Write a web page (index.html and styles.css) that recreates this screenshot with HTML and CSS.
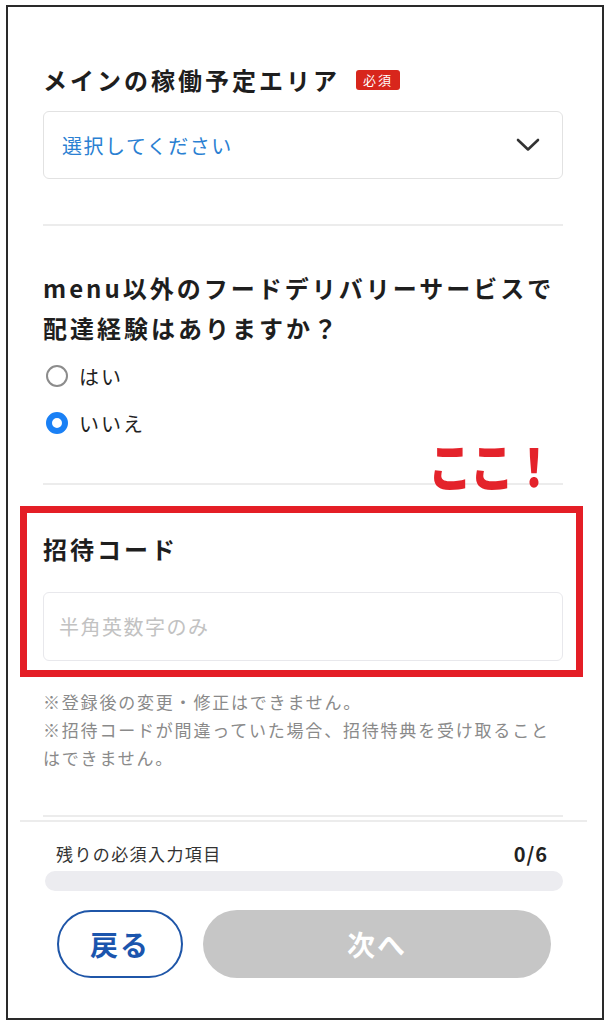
FILE: index.html
```html
<!DOCTYPE html>
<html lang="ja">

<head>
  <meta charset="UTF-8" />
  <meta name="viewport" content="width=device-width, initial-scale=1.0" />
  <title>配達パートナー登録</title>
  <link rel="stylesheet" href="styles.css">
</head>

<body>
  <div class="frame">
    <div class="form">
      <section class="field">
        <h2 class="field-title field-title--badge">メインの稼働予定エリア<span class="badge">必須</span></h2>
        <div class="select">
          <span class="select-text">選択してください</span>
          <svg class="chevron" width="24" height="14" viewBox="0 0 24 14">
            <path d="M2 2 L12 11.5 L22 2" fill="none" stroke="#333" stroke-width="2.6" stroke-linecap="round" stroke-linejoin="round" />
          </svg>
        </div>
      </section>

      <hr class="divider">

      <section class="field">
        <h2 class="field-title">menu以外のフードデリバリーサービスで配達経験はありますか？</h2>
        <div class="radios">
          <label class="radio"><span class="radio-mark"></span>はい</label>
          <label class="radio"><span class="radio-mark is-checked"></span>いいえ</label>
        </div>
      </section>

      <hr class="divider">

      <section class="field field--invite">
        <h2 class="field-title">招待コード</h2>
        <div class="input">半角英数字のみ</div>
      </section>

      <div class="notes">
        <p>※登録後の変更・修正はできません。</p>
        <p>※招待コードが間違っていた場合、招待特典を受け取ること<br>はできません。</p>
      </div>

      <hr class="divider divider--last">
    </div>

    <footer class="footer">
      <div class="progress-head">
        <span class="progress-label">残りの必須入力項目</span>
        <span class="progress-count">0/6</span>
      </div>
      <div class="progress-bar"></div>
      <div class="buttons">
        <button class="btn btn-back">戻る</button>
        <button class="btn btn-next" disabled>次へ</button>
      </div>
    </footer>

    <!-- annotation drawn over the screenshot -->
    <div class="callout-box"></div>
    <div class="callout-text">ここ！</div>
  </div>
</body>

</html>
```

FILE: styles.css
```css
* {
  box-sizing: border-box;
}

body {
  margin: 0;
  padding: 0;
  background-color: #ffffff;
  color: #222222;
  font-family: "Noto Sans CJK JP", "Noto Sans", sans-serif;
}

.frame {
  position: relative;
  height: 1015px;
  margin: 5px 7px 0 6px;
  border: 2px solid #2a2a2a;
}

.form {
  padding: 55px 39px 0 35px;
}

.field-title {
  margin: 0;
  font-size: 24px;
  line-height: 40px;
  font-weight: bold;
  letter-spacing: 3px;
  color: #1e1e1e;
}

.field-title--badge {
  display: flex;
  align-items: center;
  line-height: 36px;
}

.badge {
  display: inline-block;
  margin-left: 16px;
  padding: 0 7px;
  height: 20px;
  line-height: 20px;
  border-radius: 3px;
  background-color: #d8261c;
  color: #fff;
  font-size: 13px;
  font-weight: normal;
  letter-spacing: 2px;
}

.select {
  display: flex;
  align-items: center;
  justify-content: space-between;
  height: 68px;
  margin-top: 13px;
  padding: 0 22px 0 18px;
  border: 1.5px solid #e2e2e2;
  border-radius: 6px;
}

.select-text {
  font-size: 20px;
  letter-spacing: 1.5px;
  color: #2a80d2;
}

.divider {
  margin: 45px 0 0;
  border: none;
  border-top: 2px solid #ececec;
}

.divider + .field {
  margin-top: 42px;
}

.radios {
  display: flex;
  flex-direction: column;
  gap: 17px;
  margin-top: 13px;
}

.radio {
  display: flex;
  align-items: center;
  gap: 11px;
  height: 30px;
  padding-left: 3px;
  font-size: 20px;
  letter-spacing: 2px;
  color: #222;
}

.radio-mark {
  width: 22px;
  height: 22px;
  border-radius: 50%;
  border: 2px solid #8c8c8c;
}

.radio-mark.is-checked {
  border: 6.5px solid #1a80f5;
}

.divider + .field--invite {
  margin-top: 46px;
}

.field--invite .field-title {
  line-height: 36px;
}

.input {
  display: flex;
  align-items: center;
  height: 69px;
  margin-top: 25px;
  padding-left: 15px;
  border: 1.5px solid #e8e8ec;
  border-radius: 6px;
  font-size: 20px;
  letter-spacing: 1.5px;
  color: #c2c2c2;
}

.notes {
  margin-top: 27px;
  font-size: 17px;
  line-height: 28px;
  letter-spacing: 1.8px;
  color: #8a8a8a;
}

.notes p {
  margin: 0;
}

.divider--last {
  margin-top: 43px;
}

.footer {
  margin: 3px 15px 0 12px;
  padding: 19px 24px 0 25px;
  border-top: 2px solid #ececec;
}

.progress-head {
  display: flex;
  align-items: center;
  justify-content: space-between;
  height: 24px;
  padding: 0 15px 0 11px;
}

.progress-label {
  font-size: 17px;
  letter-spacing: 1.4px;
  color: #333;
}

.progress-count {
  font-size: 20px;
  font-weight: bold;
  letter-spacing: 1px;
  color: #222;
}

.progress-bar {
  height: 20px;
  margin-top: 6px;
  border-radius: 10px;
  background-color: #ececf0;
}

.buttons {
  display: flex;
  gap: 20px;
  margin-top: 19px;
  padding: 0 12px;
}

.btn {
  height: 68px;
  border-radius: 34px;
  font-family: inherit;
  font-size: 28px;
  font-weight: bold;
  letter-spacing: 2px;
}

.btn-back {
  width: 126px;
  background-color: #fff;
  border: 2px solid #1f56a8;
  color: #1b55ad;
}

.btn-next {
  flex: 1;
  background-color: #c6c6c6;
  border: none;
  color: #fff;
}

.callout-box {
  position: absolute;
  left: 12px;
  top: 499px;
  width: 563px;
  height: 171px;
  border: 7px solid #e41e26;
}

.callout-text {
  position: absolute;
  left: 420px;
  top: 440px;
  font-size: 44px;
  line-height: 1;
  font-weight: 900;
  letter-spacing: -2px;
  color: #e4232b;
  transform: scaleY(1.2);
  transform-origin: bottom left;
}
```
